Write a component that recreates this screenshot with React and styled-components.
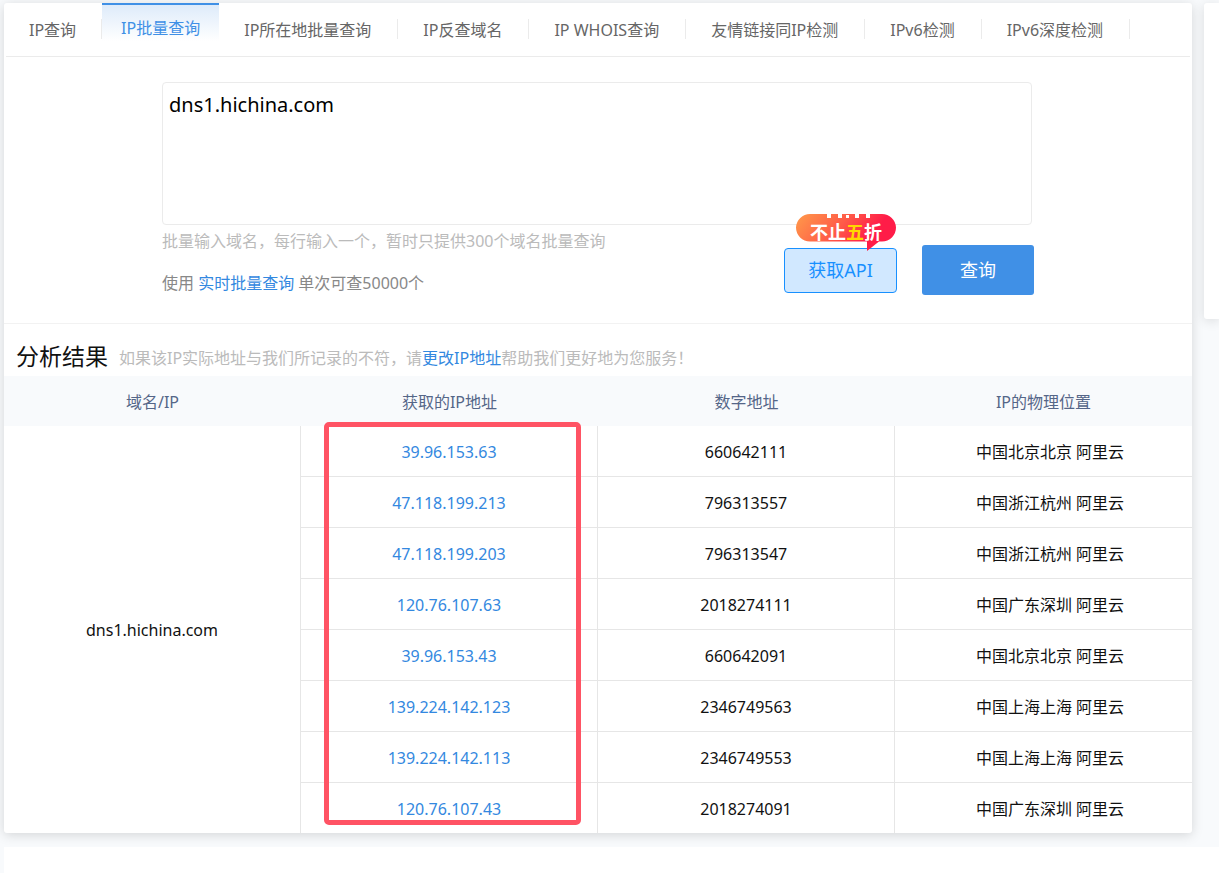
import React, { useState } from "react";
import styled, { createGlobalStyle } from "styled-components";

const tabs = [
  "IP查询",
  "IP批量查询",
  "IP所在地批量查询",
  "IP反查域名",
  "IP WHOIS查询",
  "友情链接同IP检测",
  "IPv6检测",
  "IPv6深度检测",
];

const records = [
  { ip: "39.96.153.63", number: "660642111", place: "中国北京北京 阿里云" },
  { ip: "47.118.199.213", number: "796313557", place: "中国浙江杭州 阿里云" },
  { ip: "47.118.199.203", number: "796313547", place: "中国浙江杭州 阿里云" },
  { ip: "120.76.107.63", number: "2018274111", place: "中国广东深圳 阿里云" },
  { ip: "39.96.153.43", number: "660642091", place: "中国北京北京 阿里云" },
  { ip: "139.224.142.123", number: "2346749563", place: "中国上海上海 阿里云" },
  { ip: "139.224.142.113", number: "2346749553", place: "中国上海上海 阿里云" },
  { ip: "120.76.107.43", number: "2018274091", place: "中国广东深圳 阿里云" },
];

function SaleBadge() {
  return (
    <BadgeSvg width="100" height="37" viewBox="0 0 100 37">
      <defs>
        <linearGradient id="sale" x1="0" y1="0" x2="1" y2="0.3">
          <stop offset="0" stopColor="#ff9a4a" />
          <stop offset="0.5" stopColor="#ff5a48" />
          <stop offset="0.85" stopColor="#ff1c48" />
        </linearGradient>
      </defs>
      <path
        d="M14 0H86A14 14 0 0 1 100 13.5A14 14 0 0 1 86 27.5H83L71 37V27.5H14A14 14 0 0 1 0 13.5A14 14 0 0 1 14 0Z"
        fill="url(#sale)"
      />
      {/* confetti bars along the top edge */}
      <g fill="#fff">
        <rect x="31" y="0" width="4" height="4" />
        <rect x="42" y="0" width="4" height="4" />
        <rect x="50" y="1" width="3" height="3" />
        <rect x="59" y="0" width="4" height="4" />
        <rect x="70" y="0" width="4" height="4" />
      </g>
      <text x="50" y="25" fontSize="18" fontWeight="700" fill="#fff" textAnchor="middle">
        不止<tspan fill="#ffd800">五</tspan>折
      </text>
    </BadgeSvg>
  );
}

function QueryForm() {
  const [domains, setDomains] = useState("dns1.hichina.com");

  const submitHandler = (e) => {
    e.preventDefault();
  };

  return (
    <Form onSubmit={submitHandler}>
      <DomainInput
        aria-label="域名"
        spellCheck="false"
        value={domains}
        onChange={(e) => setDomains(e.target.value)}
      />
      <FormFooter>
        <div>
          <Hint>批量输入域名，每行输入一个，暂时只提供300个域名批量查询</Hint>
          <Usage>
            使用 <Link href="#batch">实时批量查询</Link> 单次可查50000个
          </Usage>
        </div>
        <Actions>
          <ApiButton type="button">
            获取API
            <SaleBadge />
          </ApiButton>
          <SubmitButton type="submit">查询</SubmitButton>
        </Actions>
      </FormFooter>
    </Form>
  );
}

function Results() {
  return (
    <section>
      <ResultHead>
        <ResultTitle>分析结果</ResultTitle>
        <ResultNote>
          如果该IP实际地址与我们所记录的不符，请<Link href="#fix">更改IP地址</Link>
          帮助我们更好地为您服务！
        </ResultNote>
      </ResultHead>
      <TableWrap>
        <Table>
          <thead>
            <tr>
              <th>域名/IP</th>
              <th>获取的IP地址</th>
              <th>数字地址</th>
              <th>IP的物理位置</th>
            </tr>
          </thead>
          <tbody>
            {records.map((item, index) => (
              <tr key={item.ip}>
                {index === 0 && <td rowSpan={records.length}>dns1.hichina.com</td>}
                <td>
                  <Link href={"#" + item.ip}>{item.ip}</Link>
                </td>
                <td>{item.number}</td>
                <td>{item.place}</td>
              </tr>
            ))}
          </tbody>
        </Table>
        <Highlight />
      </TableWrap>
    </section>
  );
}

function App() {
  const [active, setActive] = useState(1);

  return (
    <Page>
      <GlobalStyle />
      <Content>
        <Card>
          <TabBar>
            {tabs.map((tab, index) => (
              <Tab
                key={tab}
                href="#tab"
                $active={index === active}
                onClick={() => setActive(index)}
              >
                {tab}
              </Tab>
            ))}
          </TabBar>
          <QueryForm />
          <Results />
        </Card>
        <SideCard />
      </Content>
      <Footer />
    </Page>
  );
}

export default App;

const GlobalStyle = createGlobalStyle`
  * {
    box-sizing: border-box;
  }

  body {
    margin: 0;
    background: #f8fafc;
    color: #111;
    font-family: "Noto Sans", "Noto Sans CJK SC", sans-serif;
    font-size: 16px;
    line-height: 24px;
  }

  button,
  textarea {
    font-family: inherit;
  }
`;

const Page = styled.div`
  display: flex;
  flex-direction: column;
  min-height: 100vh;
  padding: 3px 0 0 4px;
  overflow: hidden;
`;

const Content = styled.div`
  display: grid;
  grid-template-columns: minmax(0, 1fr) 15px;
  align-items: start;
  gap: 12px;
  margin-bottom: 14px;
`;

const Card = styled.main`
  background: #fff;
  border-radius: 3px;
  box-shadow: 0 2px 12px rgba(0, 0, 0, 0.15);
`;

const SideCard = styled.aside`
  height: 316px;
  background: #fff;
  border-radius: 3px 0 0 3px;
  box-shadow: 0 2px 12px rgba(0, 0, 0, 0.12);
`;

const Footer = styled.footer`
  position: relative;
  flex: 1;
  background: #fff;
`;

const TabBar = styled.nav`
  display: flex;
  height: 54px;
  margin: 0 2px;
  border-bottom: 1px solid #ebebeb;
`;

const Tab = styled.a`
  height: ${(props) => (props.$active ? "38px" : "20px")};
  margin-top: ${(props) => (props.$active ? "0" : "16px")};
  padding: ${(props) => (props.$active ? "12px 19px 0" : "0 26px 0 25px")};
  border-top: ${(props) => (props.$active ? "2px solid #4090e6" : "none")};
  border-right: ${(props) => (props.$active ? "none" : "1px solid #ebebeb")};
  background: ${(props) =>
    props.$active ? "linear-gradient(#deebfa, #fff)" : "none"};
  color: ${(props) => (props.$active ? "#4090e6" : "#666")};
  line-height: 22px;
  text-decoration: none;
  white-space: nowrap;

  &:first-child {
    padding: 0 25px 0 23px;
  }
`;

const Link = styled.a`
  color: #3388e0;
  text-decoration: none;
`;

const Form = styled.form`
  padding: 25px 158px 28px;
  border-bottom: 1px solid #f2f2f2;
`;

const DomainInput = styled.textarea`
  display: block;
  width: calc(100% - 2px);
  height: 143px;
  padding: 8px 6px;
  border: 1px solid #ebebeb;
  border-radius: 4px;
  color: #000;
  font-size: 20px;
  line-height: 28px;
  resize: none;
  outline: none;
`;

const FormFooter = styled.div`
  display: flex;
  justify-content: space-between;
`;

const Hint = styled.p`
  margin: 4px 0 18px;
  color: #bbb;
`;

const Usage = styled.p`
  margin: 0;
  color: #888;
`;

const Actions = styled.div`
  display: flex;
  align-items: center;
  gap: 25px;
  height: 50px;
  margin-top: 20px;
`;

const ApiButton = styled.button`
  position: relative;
  width: 113px;
  height: 45px;
  padding: 0 0 2px;
  border: 1px solid #1890ff;
  border-radius: 4px;
  background: #d1e8ff;
  color: #1890ff;
  font-size: 18px;
`;

const BadgeSvg = styled.svg`
  position: absolute;
  top: -35px;
  right: 0;
`;

const SubmitButton = styled.button`
  width: 112px;
  height: 50px;
  padding: 0 0 2px;
  border: none;
  border-radius: 3px;
  background: #4090e6;
  color: #fff;
  font-size: 18px;
`;

const ResultHead = styled.div`
  display: flex;
  align-items: center;
  gap: 11px;
  height: 52px;
  padding: 14px 12px 0;
`;

const ResultTitle = styled.h2`
  margin: 0;
  padding-bottom: 2px;
  font-size: 23px;
  font-weight: 400;
`;

const ResultNote = styled.p`
  margin: 0;
  padding-top: 2px;
  color: #bbb;
`;

const TableWrap = styled.div`
  position: relative;
`;

const Table = styled.table`
  width: 100%;
  border-collapse: separate;
  border-spacing: 0;
  table-layout: fixed;

  th {
    height: 50px;
    padding: 2px 0 0;
    background: #f8fafc;
    color: #556688;
    font-weight: 400;
  }

  td {
    height: 51px;
    padding: 2px 0 0;
    border-right: 1px solid #e6e6e6;
    border-bottom: 1px solid #e6e6e6;
    text-align: center;
  }

  td:last-child {
    padding-left: 13px;
    border-right: none;
  }

  td[rowspan] {
    padding-top: 0;
    border-bottom: none;
  }

  tr:last-child td {
    height: 50px;
    border-bottom: none;
  }
`;

// frame around the resolved addresses
const Highlight = styled.div`
  position: absolute;
  top: 46px;
  bottom: 8px;
  left: calc(25% + 23px);
  right: calc(50% + 17px);
  border: 5px solid #ff5364;
  border-radius: 5px;
  pointer-events: none;
`;
